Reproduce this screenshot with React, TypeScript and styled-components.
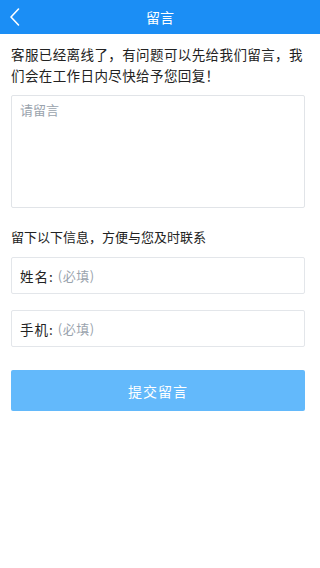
import React from "react";
import styled, { createGlobalStyle } from "styled-components";

const GlobalStyle = createGlobalStyle`
  html, body {
    margin: 0;
    padding: 0;
    background: #ffffff;
    font-family: "Noto Sans CJK SC", "Noto Sans", sans-serif;
  }
`;

const Page = styled.div`
  width: 320px;
  min-height: 568px;
  background: #fff;
`;

const Header = styled.div`
  height: 34px;
  background: #1b8ef5;
  display: flex;
  align-items: center;
  justify-content: center;
  position: relative;
  color: #fff;
  font-size: 14px;
`;

const Back = styled.div`
  position: absolute;
  left: 8px;
  top: 7px;
  width: 14px;
  height: 20px;
`;

const Body = styled.div`
  padding: 0 15px 0 11px;
  display: flex;
  flex-direction: column;
`;

const Intro = styled.p`
  margin: 10px 0 0;
  font-size: 13.5px;
  line-height: 21px;
  color: #222;
  letter-spacing: 0.4px;
`;

const MessageBox = styled.div`
  margin-top: 9px;
  height: 113px;
  border: 1px solid #e1e4e8;
  border-radius: 2px;
  padding: 4px 8px;
  box-sizing: border-box;
  font-size: 13px;
  color: #9aa3ad;
`;

const Hint = styled.div`
  margin-top: 20px;
  font-size: 13px;
  color: #222;
  line-height: 18px;
`;

const Field = styled.div<{ $gap: number }>`
  margin-top: ${(p) => p.$gap}px;
  height: 37px;
  border: 1px solid #e3e6ea;
  border-radius: 2px;
  box-sizing: border-box;
  display: flex;
  align-items: center;
  padding-left: 8px;
  font-size: 13.5px;
  color: #222;
  letter-spacing: 1px;
`;

const Required = styled.span`
  color: #9aa3ad;
  font-size: 13px;
  margin-left: 4px;
  letter-spacing: 0.5px;
`;

const Submit = styled.div`
  margin-top: 23px;
  height: 41px;
  border-radius: 2px;
  background: #63b9fb;
  color: #fff;
  font-size: 14px;
  display: flex;
  align-items: center;
  justify-content: center;
  letter-spacing: 1px;
`;

export default function App() {
  return (
    <Page>
      <GlobalStyle />
      <Header>
        <Back>
          <svg width="14" height="20" viewBox="0 0 14 20" fill="none">
            <path d="M10.5 2L3 10l7.5 8" stroke="#fff" strokeWidth="1.6" strokeLinecap="round" strokeLinejoin="round" />
          </svg>
        </Back>
        留言
      </Header>
      <Body>
        <Intro>客服已经离线了，有问题可以先给我们留言，我们会在工作日内尽快给予您回复！</Intro>
        <MessageBox>请留言</MessageBox>
        <Hint>留下以下信息，方便与您及时联系</Hint>
        <Field $gap={11}>
          姓名:<Required>(必填)</Required>
        </Field>
        <Field $gap={16}>
          手机:<Required>(必填)</Required>
        </Field>
        <Submit>提交留言</Submit>
      </Body>
    </Page>
  );
}
